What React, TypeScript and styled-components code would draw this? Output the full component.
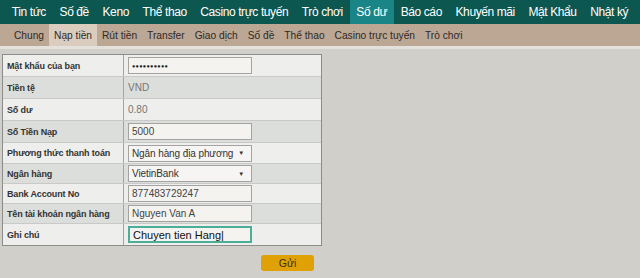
import styled, { createGlobalStyle } from "styled-components";

const GlobalStyle = createGlobalStyle`
  html, body {
    margin: 0;
    padding: 0;
    background: #d1cfca;
    font-family: "Liberation Sans", Arial, sans-serif;
  }
`;

const Page = styled.div`
  width: 640px;
  height: 278px;
  overflow: hidden;
  background: #d1cfca;
`;

const TopNav = styled.div`
  height: 24px;
  background: #0c5750;
  display: flex;
  align-items: stretch;
  padding-left: 5px;
`;

const TopItem = styled.div<{ $active?: boolean }>`
  display: flex;
  align-items: center;
  padding: 0 6.8px;
  color: #ffffff;
  font-size: 12px;
  letter-spacing: -0.4px;
  white-space: nowrap;
  background: ${(p) => (p.$active ? "#1a8586" : "transparent")};
`;

const SubNav = styled.div`
  height: 22px;
  background: #bca694;
  display: flex;
  align-items: stretch;
  padding-left: 9px;
`;

const SubItem = styled.div<{ $active?: boolean }>`
  display: flex;
  align-items: center;
  padding: 0 5px;
  color: #2e2a26;
  font-size: 10.2px;
  white-space: nowrap;
  background: ${(p) => (p.$active ? "#dacdbf" : "transparent")};
`;

const Band = styled.div`
  height: 3px;
  background: #e4e1dc;
`;

const FormTable = styled.div`
  margin: 5px 0 0 2px;
  width: 318px;
  border: 1px solid #8c8c8c;
  background: #eeeeec;
`;

const Row = styled.div<{ $alt?: boolean; $h: number }>`
  display: grid;
  grid-template-columns: 121px 1fr;
  height: ${(p) => p.$h}px;
  background: ${(p) => (p.$alt ? "#dcdedb" : "#eeeeec")};
  border-top: 1px solid #c9cac7;
  &:first-child {
    border-top: none;
  }
`;

const Label = styled.div`
  display: flex;
  align-items: center;
  padding-left: 4px;
  border-right: 1px solid #a4a4a4;
  color: #333333;
  font-size: 9px;
  font-weight: bold;
  letter-spacing: -0.15px;
  white-space: nowrap;
`;

const Cell = styled.div`
  display: flex;
  align-items: center;
  padding-left: 4px;
  color: #757575;
  font-size: 10px;
`;

const Field = styled.div<{ $focus?: boolean }>`
  box-sizing: border-box;
  width: 124px;
  height: 17px;
  display: flex;
  align-items: center;
  padding-left: 3px;
  background: #f4f3f0;
  border: ${(p) => (p.$focus ? "2px solid #4aae98" : "1px solid #a3a3a3")};
  color: ${(p) => (p.$focus ? "#111" : "#444")};
  font-size: ${(p) => (p.$focus ? "11px" : "10px")};
  white-space: nowrap;
`;

const Dots = styled.span`
  font-size: 5.5px;
  letter-spacing: 0.3px;
  color: #222;
`;

const Select = styled(Field)`
  justify-content: space-between;
  font-size: 10px;
  letter-spacing: -0.1px;
  color: #333;
  padding-right: 7px;
  background: #f6f5f3;
`;

const Caret = styled.span`
  font-size: 6px;
  color: #333;
`;

const Actions = styled.div`
  display: flex;
  padding: 9px 0 0 261px;
`;

const SubmitButton = styled.button`
  width: 53px;
  height: 16px;
  border: none;
  border-radius: 3px;
  background: #dfa106;
  color: #3a2e10;
  font-family: "Liberation Sans", Arial, sans-serif;
  font-size: 10.5px;
  padding: 0;
`;

const topItems = [
  "Tin tức",
  "Số đề",
  "Keno",
  "Thể thao",
  "Casino trực tuyến",
  "Trò chơi",
  "Số dư",
  "Báo cáo",
  "Khuyến mãi",
  "Mật Khẩu",
  "Nhật ký",
];

const subItems = [
  "Chung",
  "Nạp tiền",
  "Rút tiền",
  "Transfer",
  "Giao dịch",
  "Số đề",
  "Thể thao",
  "Casino trực tuyến",
  "Trò chơi",
];

export default function App() {
  return (
    <Page>
      <GlobalStyle />
      <TopNav>
        {topItems.map((t) => (
          <TopItem key={t} $active={t === "Số dư"}>
            {t}
          </TopItem>
        ))}
      </TopNav>
      <SubNav>
        {subItems.map((t) => (
          <SubItem key={t} $active={t === "Nạp tiền"}>
            {t}
          </SubItem>
        ))}
      </SubNav>
      <Band />
      <FormTable>
        <Row $h={21}>
          <Label>Mật khẩu của bạn</Label>
          <Cell>
            <Field>
              <Dots>●●●●●●●●●●</Dots>
            </Field>
          </Cell>
        </Row>
        <Row $alt $h={21}>
          <Label>Tiền tệ</Label>
          <Cell>VND</Cell>
        </Row>
        <Row $h={21}>
          <Label>Số dư</Label>
          <Cell>0.80</Cell>
        </Row>
        <Row $alt $h={21}>
          <Label>Số Tiền Nạp</Label>
          <Cell>
            <Field>5000</Field>
          </Cell>
        </Row>
        <Row $h={20}>
          <Label>Phương thức thanh toán</Label>
          <Cell>
            <Select>
              Ngân hàng địa phương <Caret>▼</Caret>
            </Select>
          </Cell>
        </Row>
        <Row $alt $h={19}>
          <Label>Ngân hàng</Label>
          <Cell>
            <Select>
              VietinBank <Caret>▼</Caret>
            </Select>
          </Cell>
        </Row>
        <Row $h={19}>
          <Label>Bank Account No</Label>
          <Cell>
            <Field>877483729247</Field>
          </Cell>
        </Row>
        <Row $alt $h={19}>
          <Label>Tên tài khoản ngân hàng</Label>
          <Cell>
            <Field>Nguyen Van A</Field>
          </Cell>
        </Row>
        <Row $h={21}>
          <Label>Ghi chú</Label>
          <Cell>
            <Field $focus>Chuyen tien Hang|</Field>
          </Cell>
        </Row>
      </FormTable>
      <Actions>
        <SubmitButton>Gửi</SubmitButton>
      </Actions>
    </Page>
  );
}
